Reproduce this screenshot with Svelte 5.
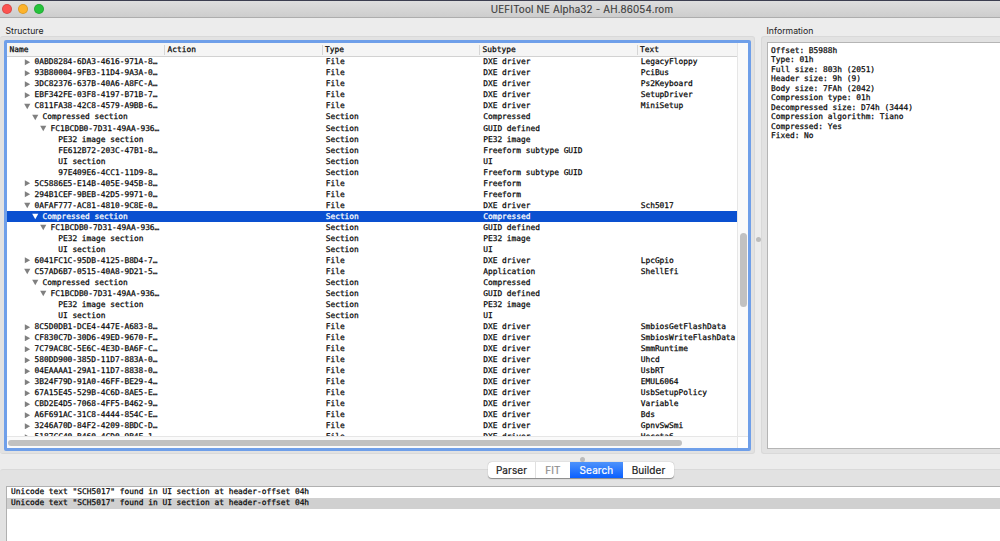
<script lang="ts">
  type Row = {
    level: number;
    state: "open" | "closed" | "leaf";
    name: string;
    type: string;
    subtype: string;
    text?: string;
    selected?: boolean;
  };

  const file = (name: string, text = "", subtype = "DXE driver", state: Row["state"] = "closed"): Row => ({
    level: 0,
    state,
    name,
    type: "File",
    subtype,
    text,
  });

  const section = (level: number, name: string, subtype: string, selected = false): Row => ({
    level,
    state: level < 3 ? "open" : "leaf",
    name,
    type: "Section",
    subtype,
    selected,
  });

  const rows: Row[] = [
    file("0ABD8284-6DA3-4616-971A-8…", "LegacyFloppy"),
    file("93B80004-9FB3-11D4-9A3A-0…", "PciBus"),
    file("3DC82376-637B-40A6-A8FC-A…", "Ps2Keyboard"),
    file("EBF342FE-03F8-4197-B71B-7…", "SetupDriver"),
    file("C811FA38-42C8-4579-A9BB-6…", "MiniSetup", "DXE driver", "open"),
    section(1, "Compressed section", "Compressed"),
    section(2, "FC1BCDB0-7D31-49AA-936…", "GUID defined"),
    section(3, "PE32 image section", "PE32 image"),
    section(3, "FE612B72-203C-47B1-8…", "Freeform subtype GUID"),
    section(3, "UI section", "UI"),
    section(3, "97E409E6-4CC1-11D9-8…", "Freeform subtype GUID"),
    file("5C5886E5-E14B-405E-945B-8…", "", "Freeform"),
    file("294B1CEF-9BEB-42D5-9971-0…", "", "Freeform"),
    file("0AFAF777-AC81-4810-9C8E-0…", "Sch5017", "DXE driver", "open"),
    section(1, "Compressed section", "Compressed", true),
    section(2, "FC1BCDB0-7D31-49AA-936…", "GUID defined"),
    section(3, "PE32 image section", "PE32 image"),
    section(3, "UI section", "UI"),
    file("6041FC1C-95DB-4125-B8D4-7…", "LpcGpio"),
    file("C57AD6B7-0515-40A8-9D21-5…", "ShellEfi", "Application", "open"),
    section(1, "Compressed section", "Compressed"),
    section(2, "FC1BCDB0-7D31-49AA-936…", "GUID defined"),
    section(3, "PE32 image section", "PE32 image"),
    section(3, "UI section", "UI"),
    file("8C5D0DB1-DCE4-447E-A683-8…", "SmbiosGetFlashData"),
    file("CF830C7D-30D6-49ED-9670-F…", "SmbiosWriteFlashData"),
    file("7C79AC8C-5E6C-4E3D-BA6F-C…", "SmmRuntime"),
    file("580DD900-385D-11D7-883A-0…", "Uhcd"),
    file("04EAAAA1-29A1-11D7-8838-0…", "UsbRT"),
    file("3B24F79D-91A0-46FF-BE29-4…", "EMUL6064"),
    file("67A15E45-529B-4C6D-8AE5-E…", "UsbSetupPolicy"),
    file("CBD2E4D5-7068-4FF5-B462-9…", "Variable"),
    file("A6F691AC-31C8-4444-854C-E…", "Bds"),
    file("3246A70D-84F2-4209-8BDC-D…", "GpnvSwSmi"),
    file("5187CC40-B460-4CD0-9B4E-1…", "Heceta6"),
  ];

  const info = [
    "Offset: B5988h",
    "Type: 01h",
    "Full size: 803h (2051)",
    "Header size: 9h (9)",
    "Body size: 7FAh (2042)",
    "Compression type: 01h",
    "Decompressed size: D74h (3444)",
    "Compression algorithm: Tiano",
    "Compressed: Yes",
    "Fixed: No",
  ];

  const tabs = ["Parser", "FIT", "Search", "Builder"];
  const columns = ["Name", "Action", "Type", "Subtype", "Text"];

  const message = 'Unicode text "SCH5017" found in UI section at header-offset 04h';
  const results = [message, message];
</script>

<div class="window">
  <header class="titlebar">
    <div class="lights">
      <span class="light close"></span>
      <span class="light minimize"></span>
      <span class="light zoom"></span>
    </div>
    <h1>UEFITool NE Alpha32 - AH.86054.rom</h1>
  </header>

  <main>
    <section class="structure">
      <h2>Structure</h2>
      <div class="group">
        <div class="tree">
          <div class="table">
            <div class="grid head">
              {#each columns as column}
                <span>{column}</span>
              {/each}
            </div>
            <div class="rows">
              {#each rows as row}
                <div class="grid row" class:selected={row.selected}>
                  <div class="name level-{row.level}">
                    {#if row.state !== "leaf"}
                      <svg class="arrow" viewBox="0 0 7 7">
                        {#if row.state === "open"}
                          <path d="M0.2 0.8h6.6L3.5 6.7z" />
                        {:else}
                          <path d="M0.9 0.2v6.6L6.6 3.5z" />
                        {/if}
                      </svg>
                    {/if}
                    <b>{row.name}</b>
                  </div>
                  <span></span>
                  <span>{row.type}</span>
                  <span>{row.subtype}</span>
                  <span>{row.text}</span>
                </div>
              {/each}
            </div>
          </div>
          <div class="track vertical"><div class="thumb"></div></div>
          <div class="track horizontal"><div class="thumb"></div></div>
          <div class="corner"></div>
        </div>
      </div>
    </section>

    <div class="splitter"><span class="dot"></span></div>

    <section class="information">
      <h2>Information</h2>
      <div class="group">
        <div class="info">
          {#each info as line}
            <p>{line}</p>
          {/each}
        </div>
      </div>
    </section>
  </main>

  <footer>
    <span class="dot"></span>
    <nav>
      {#each tabs as tab}
        <button class:active={tab === "Search"} disabled={tab === "FIT"}>{tab}</button>
      {/each}
    </nav>
    <div class="panel">
      <ul>
        {#each results as result, i}
          <li class:current={i === 1}>{result}</li>
        {/each}
      </ul>
    </div>
  </footer>
</div>

<style>
  :global(body) {
    margin: 0;
    overflow: hidden;
  }
  .window {
    --mono: "DejaVu Sans Mono", monospace;
    box-sizing: border-box;
    width: 1000px;
    height: 541px;
    display: flex;
    flex-direction: column;
    overflow: hidden;
    background: #ececec;
    border-top: 1px solid #3c3e50;
    font-family: Inter, "Liberation Sans", sans-serif;
    color: #0a0a0a;
  }
  .titlebar {
    position: relative;
    flex: none;
    box-sizing: border-box;
    height: 17px;
    display: flex;
    align-items: center;
    justify-content: center;
    background: linear-gradient(#dedede, #cdcdcd);
    border-bottom: 1px solid #adadad;
  }
  .lights {
    position: absolute;
    left: 2px;
    top: 3.3px;
    display: flex;
    gap: 6px;
  }
  .light {
    box-sizing: border-box;
    width: 10px;
    height: 10px;
    border-radius: 50%;
    border: 0.5px solid #0002;
  }
  .close {
    background: #fc5350;
  }
  .minimize {
    background: #fdb32b;
  }
  .zoom {
    background: #26c33b;
  }
  h1 {
    margin: 0;
    padding: 2px 0 0 164px;
    font-size: 9.8px;
    font-weight: 400;
    letter-spacing: 0.18px;
    line-height: 16px;
    color: #3d3d3d;
    white-space: nowrap;
    -webkit-text-stroke: 0.15px;
  }
  main {
    flex: none;
    display: flex;
    height: 437px;
  }
  h2 {
    margin: 0;
    height: 18px;
    padding-left: 5.5px;
    font-size: 8.7px;
    font-weight: 400;
    line-height: 26px;
    color: #222;
  }
  .structure {
    width: 755px;
  }
  .information {
    flex: 1;
  }
  .group {
    box-sizing: border-box;
    height: 418px;
    background: #e2e2e2;
    border: 1px solid #d9d9d9;
    border-radius: 3px;
  }
  .structure .group {
    border-left: none;
    padding: 3px 3px 2px 4px;
  }
  .information .group {
    border-right: none;
    border-radius: 3px 0 0 3px;
    padding: 5px 0 4px 5px;
  }
  .tree {
    box-sizing: border-box;
    width: 747px;
    height: 411px;
    border: 3px solid #6f9fe9;
    border-radius: 2px;
    background: #fff;
    display: grid;
    grid-template-columns: 730px 11px;
    grid-template-rows: 393px 12px;
    overflow: hidden;
  }
  .table {
    overflow: hidden;
    background: #fff;
    font: 7.86px/11px var(--mono);
    -webkit-text-stroke: 0.25px;
  }
  .grid {
    display: grid;
    grid-template-columns: 157px 157.5px 157.5px 157.5px 1fr;
    white-space: pre;
  }
  .head {
    box-sizing: border-box;
    height: 14px;
    background: #f5f5f5;
    border-bottom: 1px solid #d2d2d2;
  }
  .head span {
    box-sizing: border-box;
    height: 10px;
    margin-top: 1.5px;
    padding-left: 2.5px;
    line-height: 10px;
    border-left: 1px solid #d6d6d6;
  }
  .head span:first-child {
    padding-left: 2.5px;
    border: none;
  }
  .rows {
    margin-top: -0.6px;
  }
  .row {
    height: 11.03px;
  }
  .row span {
    padding-left: 4.2px;
  }
  .row.selected {
    background: #0a50d0;
    color: #fff;
  }
  .name {
    display: flex;
    align-items: center;
  }
  .name b {
    font-weight: 400;
  }
  .level-0 {
    padding-left: 17px;
  }
  .level-1 {
    padding-left: 25px;
  }
  .level-2 {
    padding-left: 33px;
  }
  .level-3 {
    padding-left: 51.2px;
  }
  .arrow {
    flex: none;
    width: 6.5px;
    height: 6.5px;
    margin: 1px 4px 0 0;
    fill: #808080;
  }
  .selected .arrow {
    fill: #fff;
  }
  .track {
    box-sizing: border-box;
    background: #fafafa;
  }
  .thumb {
    background: #c1c1c1;
    border-radius: 4px;
  }
  .vertical {
    border-left: 1px solid #e6e6e6;
    padding: 190px 1.5px 0 2px;
  }
  .vertical .thumb {
    width: 6.5px;
    height: 74px;
  }
  .horizontal {
    border-top: 1px solid #e6e6e6;
    padding: 2.5px 0 0 1px;
  }
  .horizontal .thumb {
    width: 674px;
    height: 6.5px;
  }
  .corner {
    border-left: 1px solid #e6e6e6;
    border-top: 1px solid #e6e6e6;
  }
  .splitter {
    width: 6px;
    display: flex;
    align-items: center;
    justify-content: center;
    padding-top: 6px;
    box-sizing: border-box;
  }
  .dot {
    flex: none;
    width: 5px;
    height: 5px;
    border-radius: 50%;
    background: #bcbcbc;
  }
  .info {
    box-sizing: border-box;
    height: 407px;
    background: #fff;
    border: 1px solid #b5b5b5;
    border-right: none;
    padding: 3px 0 0 3px;
    font: 7.86px/9.46px var(--mono);
    -webkit-text-stroke: 0.25px;
  }
  .info p {
    margin: 0;
  }
  footer {
    flex: 1;
    position: relative;
    display: flex;
    flex-direction: column;
    padding-top: 14px;
  }
  footer > .dot {
    position: absolute;
    left: 579.5px;
    top: 2px;
  }
  nav {
    position: absolute;
    left: 488px;
    top: 6.5px;
    display: flex;
    height: 16px;
    background: #fff;
    border-radius: 4px;
    box-shadow: 0 0.5px 1px #0006;
  }
  button {
    box-sizing: border-box;
    padding: 0;
    border: none;
    background: none;
    font: 10px/16px Inter, sans-serif;
    letter-spacing: 0.1px;
    color: #1c1c1c;
    -webkit-text-stroke: 0.2px;
  }
  button:nth-child(1) {
    width: 47px;
  }
  button:nth-child(2) {
    width: 35px;
    border-left: 1px solid #e0e0e0;
  }
  button:nth-child(3) {
    width: 53px;
  }
  button:nth-child(4) {
    width: 51px;
  }
  button:disabled {
    color: #8e8e8e;
  }
  .active {
    background: linear-gradient(#4e93fb, #0a60ff);
    color: #fff;
  }
  .panel {
    flex: 1;
    box-sizing: border-box;
    padding: 16px 0 0 6px;
    background: #e2e2e2;
    border-top: 1px solid #d9d9d9;
    border-radius: 3px 0 0 0;
  }
  ul {
    box-sizing: border-box;
    height: 100%;
    margin: 0;
    padding: 0;
    list-style: none;
    background: #fff;
    border: 1px solid #b0b0b0;
    border-width: 1px 0 0 1px;
    font: 7.86px/10px var(--mono);
    -webkit-text-stroke: 0.25px;
  }
  li {
    height: 11px;
    padding-left: 4px;
    white-space: pre;
  }
  .current {
    background: #d0d0d0;
  }
</style>
